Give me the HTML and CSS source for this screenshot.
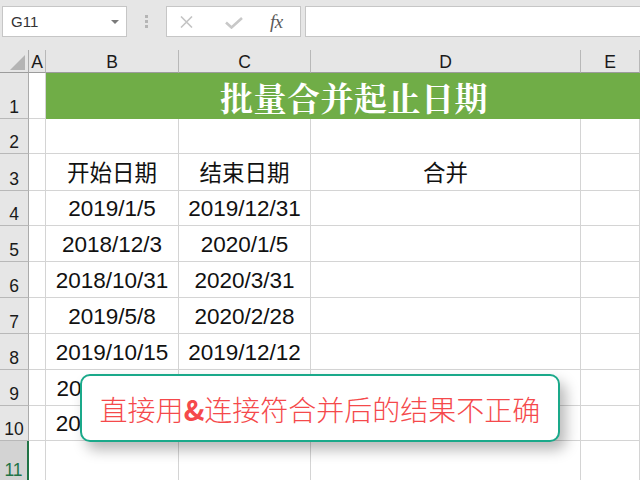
FILE: index.html
```html
<!DOCTYPE html>
<html lang="zh-CN">
<head>
<meta charset="utf-8">
<title>批量合并起止日期</title>
<link rel="stylesheet" href="styles.css">
</head>
<body>
<div class="toolbar">
  <div class="namebox"><span class="ref">G11</span><span class="caret"></span></div>
  <div class="grip"><i></i><i></i><i></i></div>
  <div class="fbtns">
    <svg class="ic-x" width="13" height="12" viewBox="0 0 13 12"><path d="M1 0.5 L12 11.5 M12 0.5 L1 11.5" stroke="#c4c4c4" stroke-width="1.6" fill="none"/></svg>
    <svg class="ic-ok" width="18" height="12" viewBox="0 0 18 12"><path d="M1 5.5 L6.5 10.5 L17 1" stroke="#c8c8c8" stroke-width="2.6" fill="none"/></svg>
    <span class="fx">fx</span>
  </div>
  <div class="finput"></div>
</div>

<div class="sheet">
  <div class="corner"><span class="tri"></span></div>
  <div class="ch">A</div>
  <div class="ch">B</div>
  <div class="ch">C</div>
  <div class="ch">D</div>
  <div class="ch">E</div>

  <div class="rh">1</div>
  <div class="c"></div>
  <div class="title">批量合并起止日期</div>

  <div class="rh">2</div>
  <div class="c"></div><div class="c"></div><div class="c"></div><div class="c"></div><div class="c"></div>

  <div class="rh">3</div>
  <div class="c"></div><div class="c">开始日期</div><div class="c">结束日期</div><div class="c">合并</div><div class="c"></div>

  <div class="rh">4</div>
  <div class="c"></div><div class="c">2019/1/5</div><div class="c">2019/12/31</div><div class="c"></div><div class="c"></div>

  <div class="rh">5</div>
  <div class="c"></div><div class="c">2018/12/3</div><div class="c">2020/1/5</div><div class="c"></div><div class="c"></div>

  <div class="rh">6</div>
  <div class="c"></div><div class="c">2018/10/31</div><div class="c">2020/3/31</div><div class="c"></div><div class="c"></div>

  <div class="rh">7</div>
  <div class="c"></div><div class="c">2019/5/8</div><div class="c">2020/2/28</div><div class="c"></div><div class="c"></div>

  <div class="rh">8</div>
  <div class="c"></div><div class="c">2019/10/15</div><div class="c">2019/12/12</div><div class="c"></div><div class="c"></div>

  <div class="rh">9</div>
  <div class="c"></div><div class="c">2019/11/20</div><div class="c"></div><div class="c"></div><div class="c"></div>

  <div class="rh">10</div>
  <div class="c"></div><div class="c">2020/10/10</div><div class="c"></div><div class="c"></div><div class="c"></div>

  <div class="rh sel">11</div>
  <div class="c"></div><div class="c"></div><div class="c"></div><div class="c"></div><div class="c"></div>
</div>

<div class="callout">直接用<b>&amp;</b>连接符合并后的结果不正确</div>
</body>
</html>
```

FILE: styles.css
```css
html, body {
  margin: 0;
  padding: 0;
}
body {
  width: 640px;
  height: 480px;
  overflow: hidden;
  position: relative;
  background: #e6e6e6;
  font-family: "Liberation Sans", "Noto Sans CJK SC", sans-serif;
  color: #111;
}

/* ---------- toolbar ---------- */
.toolbar {
  height: 50px;
  box-sizing: border-box;
  padding-top: 6px;
  display: flex;
  align-items: flex-start;
}
.namebox {
  margin-left: 2px;
  width: 125px;
  height: 31px;
  box-sizing: border-box;
  background: #fff;
  border: 1px solid #c6c6c6;
  display: flex;
  align-items: center;
  justify-content: space-between;
  padding: 0 7px 0 8px;
}
.ref {
  font-size: 15px;
  color: #333;
}
.caret {
  width: 0;
  height: 0;
  border-left: 4px solid transparent;
  border-right: 4px solid transparent;
  border-top: 4px solid #7a7a7a;
}
.grip {
  width: 39px;
  height: 31px;
  display: flex;
  flex-direction: column;
  align-items: center;
  justify-content: center;
  gap: 2px;
}
.grip i {
  display: block;
  width: 3px;
  height: 3px;
  background: #b5b5b5;
}
.fbtns {
  width: 135px;
  height: 31px;
  box-sizing: border-box;
  background: #fff;
  border: 1px solid #c6c6c6;
  display: flex;
  align-items: center;
  padding-left: 13px;
}
.ic-x { margin-top: 1px; }
.ic-ok { margin-left: 32px; margin-top: 2px; }
.fx {
  margin-left: 27px;
  font-family: "Liberation Serif", serif;
  font-style: italic;
  font-size: 19px;
  color: #5a5a5a;
  letter-spacing: -0.5px;
}
.finput {
  margin-left: 4px;
  flex: 1;
  height: 31px;
  box-sizing: border-box;
  background: #fff;
  border: 1px solid #c6c6c6;
  border-right: none;
}

/* ---------- sheet ---------- */
.sheet {
  display: grid;
  grid-template-columns: 29px 17px 133px 132px 270px 1fr;
  grid-template-rows: 23px 46px 35px 37px 35px 36px 36px 36px 36px 36px 35px 40px;
}
.sheet > div {
  box-sizing: border-box;
}
.corner {
  background: #e6e6e6;
  border-right: 1px solid #ababab;
  border-bottom: 1px solid #9c9c9c;
  position: relative;
}
.tri {
  position: absolute;
  left: 10px;
  top: 5px;
  width: 0;
  height: 0;
  border-left: 15px solid transparent;
  border-bottom: 15px solid #b4b4b4;
}
.ch {
  background: #e6e6e6;
  border-right: 1px solid #b8b8b8;
  border-bottom: 1px solid #9c9c9c;
  display: flex;
  align-items: flex-end;
  justify-content: center;
  font-size: 17.5px;
  line-height: 1;
  padding-bottom: 1px;
  color: #1a1a1a;
}
.rh {
  background: #e6e6e6;
  border-right: 1px solid #ababab;
  border-bottom: 1px solid #b8b8b8;
  display: flex;
  align-items: flex-end;
  justify-content: center;
  font-size: 17.5px;
  line-height: 1;
  padding-bottom: 2px;
  color: #1a1a1a;
}
.rh.sel {
  background: #d3d3d3;
  color: #217346;
  border-right: 2px solid #217346;
  border-bottom: none;
}
.c {
  background: #fff;
  border-right: 1px solid #d4d4d4;
  border-bottom: 1px solid #d4d4d4;
  display: flex;
  align-items: flex-end;
  justify-content: center;
  font-size: 22.5px;
  line-height: 22px;
  padding-bottom: 5px;
  white-space: nowrap;
  color: #111;
}
.title {
  grid-column: 3 / 7;
  background: #70ad47;
  color: #fff;
  font-family: "Noto Serif CJK SC", "Noto Sans CJK SC", serif;
  font-weight: bold;
  font-size: 33px;
  letter-spacing: 0.5px;
  display: flex;
  align-items: center;
  justify-content: center;
  padding-left: 22px;
  padding-top: 2px;
  border-bottom: 1px solid #70ad47;
}

/* ---------- callout ---------- */
.callout {
  position: absolute;
  left: 80px;
  top: 374px;
  width: 480px;
  height: 68px;
  box-sizing: border-box;
  background: #fff;
  border: 2px solid #1aa98a;
  border-radius: 10px;
  box-shadow: 6px 8px 14px rgba(0, 0, 0, 0.28);
  display: flex;
  align-items: center;
  justify-content: center;
  font-family: "Noto Sans CJK SC", sans-serif;
  font-weight: 300;
  font-size: 28px;
  color: #f5494b;
  padding-top: 2px;
}
.callout b {
  font-weight: bold;
}
```
